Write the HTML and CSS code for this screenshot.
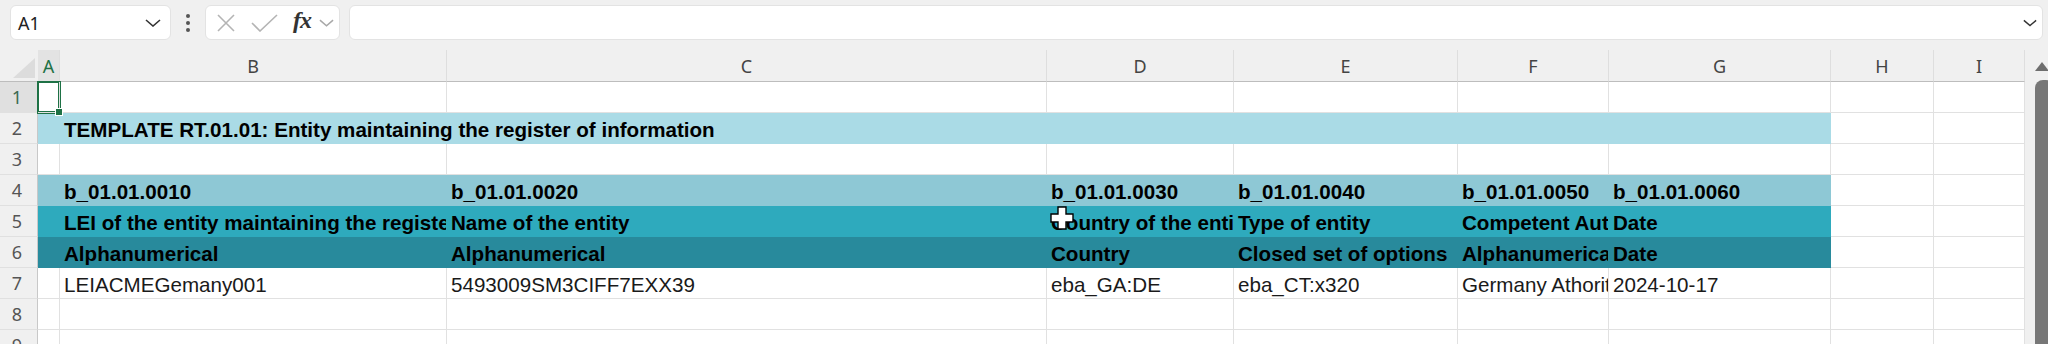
FILE: index.html
```html
<!DOCTYPE html>
<html>
  <head>
    <title>RT.01.01 - Register of information</title>
    <link rel="stylesheet" href="styles.css">
  </head>
  <body>
    <div class="toolbar">
      <div class="name-box">
        <span class="name-box-text">A1</span>
        <svg class="chevron" width="16" height="8" viewBox="0 0 16 8"><path d="M1 1 L8 7 L15 1" /></svg>
      </div>
      <div class="more-dots">
        <span></span><span></span><span></span>
      </div>
      <div class="fx-box">
        <svg class="fx-icon" width="20" height="18" viewBox="0 0 20 18"><path d="M2 1 L18 17 M18 1 L2 17" /></svg>
        <svg class="fx-icon" width="27" height="18" viewBox="0 0 27 18"><path d="M1 9 L9 17 L26 1" /></svg>
        <span class="fx-label">fx</span>
        <svg class="chevron light" width="15" height="8" viewBox="0 0 16 8"><path d="M1 1 L8 7 L15 1" /></svg>
      </div>
      <div class="formula-input">
        <svg class="chevron" width="14" height="8" viewBox="0 0 16 8"><path d="M1 1 L8 7 L15 1" /></svg>
      </div>
    </div>

    <div class="workspace">
      <div class="sheet">
        <div class="grid">
          <!-- column headers -->
          <div class="corner"><span class="corner-tri"></span></div>
          <div class="col-head active">A</div>
          <div class="col-head">B</div>
          <div class="col-head">C</div>
          <div class="col-head">D</div>
          <div class="col-head">E</div>
          <div class="col-head">F</div>
          <div class="col-head">G</div>
          <div class="col-head">H</div>
          <div class="col-head">I</div>

          <!-- row 1 -->
          <div class="row-head active">1</div>
          <div class="cell selected"><span class="handle"></span></div>
          <div class="cell"></div><div class="cell"></div><div class="cell"></div><div class="cell"></div>
          <div class="cell"></div><div class="cell"></div><div class="cell"></div><div class="cell"></div>

          <!-- row 2 -->
          <div class="row-head">2</div>
          <div class="cell band-title"></div>
          <div class="cell band-title bold span-bg">TEMPLATE RT.01.01: Entity maintaining the register of information</div>
          <div class="cell"></div><div class="cell"></div>

          <!-- row 3 -->
          <div class="row-head">3</div>
          <div class="cell"></div><div class="cell"></div><div class="cell"></div><div class="cell"></div><div class="cell"></div>
          <div class="cell"></div><div class="cell"></div><div class="cell"></div><div class="cell"></div>

          <!-- row 4 -->
          <div class="row-head">4</div>
          <div class="cell band-code"></div>
          <div class="cell band-code bold">b_01.01.0010</div>
          <div class="cell band-code bold">b_01.01.0020</div>
          <div class="cell band-code bold">b_01.01.0030</div>
          <div class="cell band-code bold">b_01.01.0040</div>
          <div class="cell band-code bold">b_01.01.0050</div>
          <div class="cell band-code bold">b_01.01.0060</div>
          <div class="cell"></div><div class="cell"></div>

          <!-- row 5 -->
          <div class="row-head">5</div>
          <div class="cell band-label"></div>
          <div class="cell band-label bold">LEI of the entity maintaining the register of information</div>
          <div class="cell band-label bold">Name of the entity</div>
          <div class="cell band-label bold">Country of the entity</div>
          <div class="cell band-label bold">Type of entity</div>
          <div class="cell band-label bold">Competent Authority</div>
          <div class="cell band-label bold">Date</div>
          <div class="cell"></div><div class="cell"></div>

          <!-- row 6 -->
          <div class="row-head">6</div>
          <div class="cell band-type"></div>
          <div class="cell band-type bold">Alphanumerical</div>
          <div class="cell band-type bold">Alphanumerical</div>
          <div class="cell band-type bold">Country</div>
          <div class="cell band-type bold">Closed set of options</div>
          <div class="cell band-type bold">Alphanumerical</div>
          <div class="cell band-type bold">Date</div>
          <div class="cell"></div><div class="cell"></div>

          <!-- row 7 -->
          <div class="row-head">7</div>
          <div class="cell"></div>
          <div class="cell">LEIACMEGemany001</div>
          <div class="cell">5493009SM3CIFF7EXX39</div>
          <div class="cell">eba_GA:DE</div>
          <div class="cell">eba_CT:x320</div>
          <div class="cell">Germany Athority</div>
          <div class="cell">2024-10-17</div>
          <div class="cell"></div><div class="cell"></div>

          <!-- row 8 -->
          <div class="row-head">8</div>
          <div class="cell"></div><div class="cell"></div><div class="cell"></div><div class="cell"></div><div class="cell"></div>
          <div class="cell"></div><div class="cell"></div><div class="cell"></div><div class="cell"></div>

          <!-- row 9 -->
          <div class="row-head">9</div>
          <div class="cell"></div><div class="cell"></div><div class="cell"></div><div class="cell"></div><div class="cell"></div>
          <div class="cell"></div><div class="cell"></div><div class="cell"></div><div class="cell"></div>
        </div>

        <!-- mouse pointer over D4/D5 -->
        <svg class="pointer" width="24" height="24" viewBox="0 0 24 24">
          <path d="M8 1 H16 V8 H23 V16 H16 V23 H8 V16 H1 V8 H8 Z" />
        </svg>
      </div>

      <div class="scrollbar">
        <span class="scroll-up"></span>
        <span class="scroll-thumb"></span>
      </div>
    </div>
  </body>
</html>
```

FILE: styles.css
```css
body {
  margin: 0;
  width: 2048px;
  height: 344px;
  overflow: hidden;
  background-color: #f0f0f0;
  font-family: "Liberation Sans", Arial, sans-serif;
}

/* ---------- formula bar ---------- */

.toolbar {
  height: 50px;
  display: flex;
  align-items: flex-start;
  padding: 5px 5px 0 10px;
  box-sizing: border-box;
  gap: 0;
}

.name-box,
.fx-box,
.formula-input {
  height: 35px;
  box-sizing: border-box;
  background-color: #fff;
  border: 1px solid #e3e3e3;
  border-radius: 6px;
  display: flex;
  align-items: center;
}

.name-box {
  width: 161px;
  padding: 0 9px 0 7px;
  justify-content: space-between;
}

.name-box-text {
  font-family: "Noto Sans", "Open Sans", sans-serif;
  font-size: 18px;
  color: #222;
}

.chevron path {
  fill: none;
  stroke: #333;
  stroke-width: 1.6;
}

.chevron.light path {
  stroke: #a8a8a8;
}

.more-dots {
  width: 34px;
  height: 35px;
  display: flex;
  flex-direction: column;
  align-items: center;
  justify-content: center;
  gap: 3px;
}

.more-dots span {
  width: 4px;
  height: 4px;
  border-radius: 2px;
  background-color: #555;
}

.fx-box {
  width: 135px;
  padding: 0 3px 0 10px;
  gap: 0;
}

.fx-icon {
  margin-right: 15px;
}

.fx-icon path {
  fill: none;
  stroke: #b4b4b4;
  stroke-width: 1.6;
}

.fx-label {
  font-family: "Liberation Serif", "Times New Roman", serif;
  font-style: italic;
  font-weight: bold;
  font-size: 24px;
  color: #333;
  margin: -4px 8px 0 0;
  letter-spacing: -1px;
}

.formula-input {
  flex: 1;
  margin-left: 9px;
  justify-content: flex-end;
  padding-right: 5px;
}

/* ---------- sheet ---------- */

.workspace {
  display: flex;
  height: 294px;
}

.sheet {
  position: relative;
  width: 2025px;
  overflow: hidden;
  background-color: #fff;
}

.grid {
  display: grid;
  grid-template-columns: 38px 22px 387px 600px 187px 224px 151px 222px 103px 91px;
  grid-template-rows: 32px repeat(9, 31px);
}

.corner {
  position: relative;
  background-color: #f0f0f0;
  border-bottom: 1px solid #bdbdbd;
  box-sizing: border-box;
}

.corner-tri {
  position: absolute;
  right: 3px;
  bottom: 3px;
  width: 0;
  height: 0;
  border-left: 22px solid transparent;
  border-bottom: 20px solid #dcdcdc;
}

.col-head {
  background-color: #f0f0f0;
  border-bottom: 1px solid #bdbdbd;
  border-right: 1px solid #dedede;
  box-sizing: border-box;
  text-align: center;
  font-family: "Noto Sans", "Open Sans", sans-serif;
  font-size: 18px;
  line-height: 29px;
  padding-top: 2px;
  color: #444;
}

.col-head.active {
  background-color: #e3e3e3;
  color: #1e7145;
}

.row-head {
  background-color: #f0f0f0;
  border-bottom: 1px solid #e0e0e0;
  border-right: 1px solid #c8c8c8;
  box-sizing: border-box;
  text-align: center;
  padding-right: 3px;
  font-family: "Noto Sans", "Open Sans", sans-serif;
  font-size: 18px;
  line-height: 30px;
  color: #555;
}

.row-head.active {
  background-color: #e0e0e0;
  color: #3d6a52;
}

.cell {
  box-sizing: border-box;
  border-right: 1px solid #e1e1e1;
  border-bottom: 1px solid #e1e1e1;
  padding: 4px 0 0 4px;
  font-size: 20.6px;
  line-height: 26px;
  color: #1a1a1a;
  white-space: nowrap;
  overflow: hidden;
}

.bold {
  font-weight: bold;
  color: #000;
}

.selected {
  position: relative;
  overflow: visible;
  z-index: 1;
  box-shadow: 0 0 0 1px #1e7145, inset 0 0 0 1px #1e7145;
}

.handle {
  position: absolute;
  right: -4px;
  bottom: -4px;
  width: 6px;
  height: 6px;
  background-color: #1e7145;
  border: 1px solid #fff;
}

.span-bg {
  grid-column: 3 / 9;
  overflow: visible;
}

.band-title,
.band-code,
.band-label,
.band-type {
  border-color: transparent;
}

.band-title { background-color: #aadbe6; }
.band-code  { background-color: #8ec8d5; }
.band-label { background-color: #2eaabd; }
.band-type  { background-color: #288a9c; }

.pointer {
  position: absolute;
  left: 1050px;
  top: 156px;
}

.pointer path {
  fill: #fff;
  stroke: #000;
  stroke-width: 1.4;
}

/* ---------- vertical scrollbar ---------- */

.scrollbar {
  position: relative;
  flex: 1;
  background-color: #f0f0f0;
}

.scroll-up {
  position: absolute;
  left: 10px;
  top: 12px;
  width: 0;
  height: 0;
  border-left: 7px solid transparent;
  border-right: 7px solid transparent;
  border-bottom: 9px solid #6e6e6e;
}

.scroll-thumb {
  position: absolute;
  left: 10px;
  right: -6px;
  top: 30px;
  bottom: 0;
  background-color: #777;
  border-radius: 8px 8px 0 0;
}
```
